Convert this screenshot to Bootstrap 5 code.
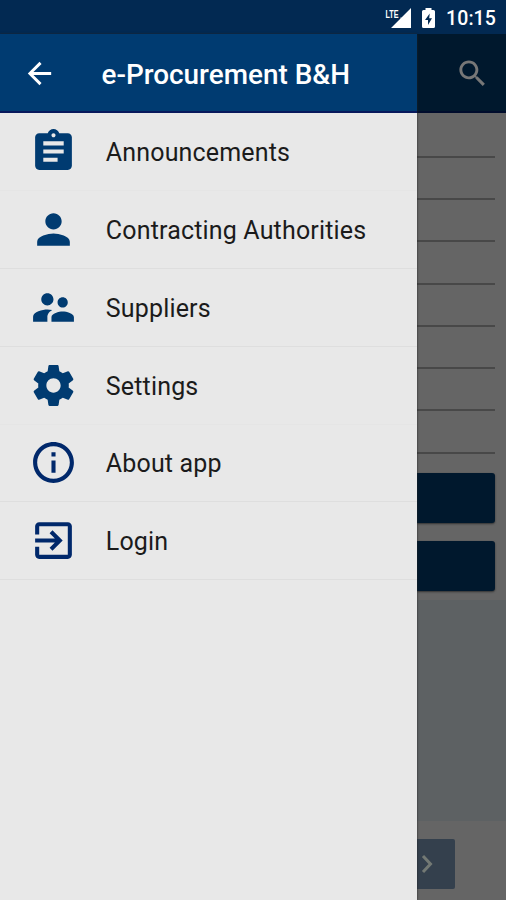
<!DOCTYPE html>
<html lang="en">
<head>
<meta charset="utf-8">
<meta name="viewport" content="width=device-width, initial-scale=1">
<title>e-Procurement B&amp;H</title>
<link href="https://cdn.jsdelivr.net/npm/bootstrap@5.3.0/dist/css/bootstrap.min.css" rel="stylesheet">
<style>
  body { font-family: Roboto, "Liberation Sans", sans-serif; background: #656565; }
  svg { display: block; flex: none; }
  .screen { width: 506px; height: 900px; }
  .status-bar { height: 34px; background: #022952; padding: 2px 10px 0 0; }
  .clock { font-size: 19.5px; font-weight: 500; line-height: 32px; letter-spacing: .1px; margin: 1px 0 0 10px; }
  .lte { font: 700 11.5px/12px "Liberation Sans", sans-serif; }
  .drawer { width: 417px; background: #e8e8e8; box-shadow: 0 0 2px #222; }
  .drawer-head { height: 78.5px; background: #003b71; border-bottom: 2px solid #08195c; padding: 2px 0 0 21.5px; margin-bottom: .9px; }
  .drawer-title { font-size: 27.9px; font-weight: 500; line-height: 30px; margin: 3px 0 0 45px; }
  .menu-row { height: 77.8px; padding: 0 0 0 28.8px; gap: 28px; border-bottom: 1px solid #dedede; color: #003b71; }
  .menu-row.faint { border-bottom-color: #e5e5e5; }
  .menu-label { color: #1b1b1b; font-size: 25px; line-height: 30px; letter-spacing: .17px; padding-top: 3px; }
  .page-head { height: 78.5px; background: #00182d; border-bottom: 2px solid #000c2c; padding: 2px 0 0 38px; color: #777; }
  .form-area { height: 487.5px; padding: 3.2px 11px 0 0; }
  .field-line { height: 42.25px; border-bottom: 2px solid #484848; }
  .actions { gap: 17.5px; padding-top: 19.5px; }
  .action { height: 50px; background: #00182d; border-radius: 0 3px 3px 0; box-shadow: 0 1px 2px #333; }
  .results { height: 221px; background: #5d6163; }
  .next { width: 38px; height: 50px; margin-top: 18px; background: #34404d; border-radius: 0 2px 2px 0; color: #737974; }
</style>
</head>
<body>
<div class="screen d-flex flex-column overflow-hidden">
  <div class="status-bar d-flex align-items-center justify-content-end text-white">
    <svg width="28" height="22" viewBox="0 0 28 22" fill="#fff">
      <text class="lte" x="0.500" y="11" textLength="13" lengthAdjust="spacingAndGlyphs">LTE</text>
      <path d="M26 1V21H6L15.500 11.500V10.500H16.500Z"/>
    </svg>
    <svg class="ms-2" width="15" height="22" viewBox="0 0 15 22">
      <path fill="#fff" d="M4.500 1H10.500V3H12.500Q14 3 14 4.500V19.500Q14 21 12.500 21H2.500Q1 21 1 19.500V4.500Q1 3 2.500 3H4.500Z"/>
      <path fill="#022952" d="M8.700 6.500L4 13H7V18L11 11.300H8.200Z"/>
    </svg>
    <span class="clock">10:15</span>
  </div>
  <div class="d-flex flex-grow-1">
    <nav class="drawer position-relative z-1 flex-shrink-0">
      <div class="drawer-head d-flex align-items-center text-white">
        <svg width="35" height="35" viewBox="0 0 24 24" fill="currentColor"><path d="M20 11H7.830l5.590-5.590L12 4l-8 8 8 8 1.410-1.410L7.830 13H20z"/></svg>
        <h1 class="drawer-title text-nowrap">e-Procurement B&amp;H</h1>
      </div>
      <div class="menu-row faint d-flex align-items-center">
        <svg width="49" height="49" viewBox="0 0 24 24" fill="currentColor"><path d="M19 3h-4.180C14.400 1.840 13.300 1 12 1S9.600 1.840 9.180 3H5c-1.100 0-2 .9-2 2v14c0 1.100.9 2 2 2h14c1.100 0 2-.9 2-2V5c0-1.100-.9-2-2-2zm-7 0c.55 0 1 .45 1 1s-.45 1-1 1-1-.45-1-1 .45-1 1-1zm2 14H7v-2h7zm3-4H7v-2h10zm0-4H7V7h10z"/></svg>
        <span class="menu-label">Announcements</span>
      </div>
      <div class="menu-row d-flex align-items-center">
        <svg width="49" height="49" viewBox="0 0 24 24" fill="currentColor"><path d="M12 12c2.210 0 4-1.790 4-4s-1.790-4-4-4-4 1.790-4 4 1.790 4 4 4zm0 2c-2.670 0-8 1.340-8 4v2h16v-2c0-2.660-5.330-4-8-4z"/></svg>
        <span class="menu-label">Contracting Authorities</span>
      </div>
      <div class="menu-row d-flex align-items-center">
        <svg width="49" height="49" viewBox="0 0 24 24" fill="currentColor"><path d="M16.500 12c1.380 0 2.490-1.120 2.490-2.500S17.880 7 16.500 7 14 8.120 14 9.500s1.120 2.500 2.500 2.500zM9 11c1.660 0 2.990-1.340 2.990-3S10.660 5 9 5 6 6.340 6 8s1.340 3 3 3zm7.500 3c-1.830 0-5.500.92-5.500 2.750V19h11v-2.250C22 14.920 18.330 14 16.500 14zM9 13c-2.330 0-7 1.170-7 3.500V19h7v-2.250c0-.85.33-2.340 2.370-3.470C10.500 13.100 9.660 13 9 13z"/></svg>
        <span class="menu-label">Suppliers</span>
      </div>
      <div class="menu-row faint d-flex align-items-center">
        <svg width="49" height="49" viewBox="0 0 24 24" fill="currentColor"><path d="M19.430 12.980c.04-.32.07-.64.07-.98s-.03-.66-.07-.98l2.110-1.650c.19-.15.24-.42.12-.64l-2-3.460c-.12-.22-.39-.3-.61-.22l-2.490 1c-.52-.4-1.080-.73-1.690-.98l-.38-2.650C14.460 2.180 14.250 2 14 2h-4c-.25 0-.46.18-.49.42l-.38 2.650c-.61.25-1.170.59-1.690.98l-2.490-1c-.23-.09-.49 0-.61.22l-2 3.460c-.13.22-.07.49.12.64l2.110 1.650c-.04.32-.07.65-.07.98s.03.66.07.98l-2.110 1.650c-.19.15-.24.42-.12.64l2 3.460c.12.22.39.3.61.22l2.490-1c.52.4 1.080.73 1.690.98l.38 2.650c.03.24.24.42.49.42h4c.25 0 .46-.18.49-.42l.38-2.650c.61-.25 1.170-.59 1.690-.98l2.490 1c.23.09.49 0 .61-.22l2-3.460c.12-.22.07-.49-.12-.64zM12 15.500c-1.930 0-3.500-1.570-3.500-3.500s1.570-3.500 3.500-3.500 3.500 1.570 3.500 3.500-1.570 3.500-3.500 3.500z"/></svg>
        <span class="menu-label">Settings</span>
      </div>
      <div class="menu-row d-flex align-items-center">
        <svg width="49" height="49" viewBox="0 0 24 24" fill="#00286b"><path d="M11 17h2v-6h-2zm1-15C6.480 2 2 6.480 2 12s4.480 10 10 10 10-4.480 10-10S17.520 2 12 2zm0 18c-4.410 0-8-3.590-8-8s3.590-8 8-8 8 3.590 8 8-3.590 8-8 8zM11 9h2V7h-2z"/></svg>
        <span class="menu-label">About app</span>
      </div>
      <div class="menu-row d-flex align-items-center">
        <svg width="49" height="49" viewBox="0 0 24 24" fill="#00286b"><path d="M10.090 15.590L11.500 17l5-5-5-5-1.410 1.410L12.670 11H3v2h9.670zM19 3H5c-1.110 0-2 .9-2 2v4h2V5h14v14H5v-4H3v4c0 1.100.89 2 2 2h14c1.100 0 2-.9 2-2V5c0-1.100-.9-2-2-2z"/></svg>
        <span class="menu-label">Login</span>
      </div>
    </nav>
    <main class="flex-grow-1">
      <div class="page-head d-flex align-items-center">
        <svg width="35" height="35" viewBox="0 0 24 24" fill="currentColor"><path d="M15.500 14h-.79l-.28-.27C15.410 12.590 16 11.110 16 9.500 16 5.910 13.090 3 9.500 3S3 5.910 3 9.500 5.910 16 9.500 16c1.610 0 3.090-.59 4.230-1.570l.27.28v.79l5 4.990L20.490 19zm-6 0C7.010 14 5 11.990 5 9.500S7.010 5 9.500 5 14 7.010 14 9.500 11.990 14 9.500 14z"/></svg>
      </div>
      <div class="form-area">
        <div class="field-line"></div>
        <div class="field-line"></div>
        <div class="field-line"></div>
        <div class="field-line"></div>
        <div class="field-line"></div>
        <div class="field-line"></div>
        <div class="field-line"></div>
        <div class="field-line"></div>
        <div class="actions d-grid">
          <div class="action"></div>
          <div class="action"></div>
        </div>
      </div>
      <div class="results"></div>
      <div class="next d-flex align-items-center">
        <svg width="20" height="20" viewBox="0 0 20 20" fill="none" stroke="currentColor" stroke-width="3"><path d="M6 2L13.500 10L6 18"/></svg>
      </div>
    </main>
  </div>
</div>
<script src="https://cdn.jsdelivr.net/npm/bootstrap@5.3.0/dist/js/bootstrap.bundle.min.js"></script>
</body>
</html>
